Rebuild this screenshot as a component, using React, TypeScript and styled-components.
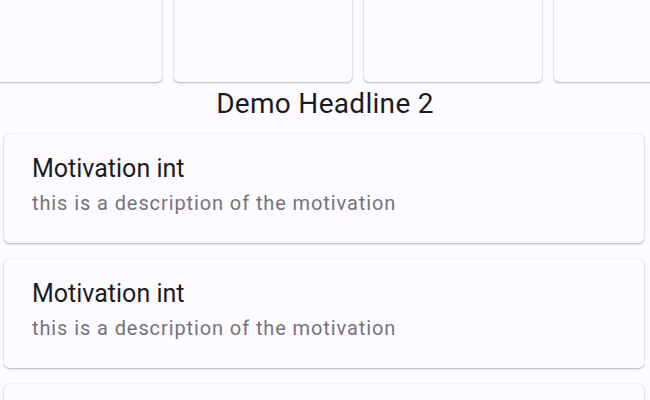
import React from "react";
import styled, { createGlobalStyle } from "styled-components";

const GlobalStyle = createGlobalStyle`
  html, body {
    margin: 0;
    padding: 0;
    background: #fdfbff;
    font-family: Roboto, "Noto Sans", sans-serif;
    overflow: hidden;
  }
`;

const Page = styled.div`
  width: 650px;
  height: 400px;
  overflow: hidden;
  background: #fdfbff;
`;

const Strip = styled.div`
  display: flex;
  gap: 12px;
  margin: -30px 0 0 -16px;
  padding-bottom: 2px;
`;

const TileCard = styled.div`
  flex: 0 0 178px;
  height: 112px;
  border-radius: 5px;
  background: #fdfbff;
  box-shadow: 0 1px 2px rgba(60, 60, 90, 0.35), 0 0 1px rgba(80, 80, 140, 0.35);
`;

const Headline = styled.h2`
  margin: 2px 0 0;
  text-align: center;
  font-size: 28px;
  font-weight: 400;
  letter-spacing: 0.3px;
  line-height: 36px;
  color: #1b1b1f;
`;

const List = styled.div`
  display: flex;
  flex-direction: column;
  gap: 16px;
  padding: 12px 6px 0 4px;
`;

const ItemCard = styled.div`
  height: 109px;
  flex: 0 0 auto;
  box-sizing: border-box;
  padding: 19px 28px 0;
  border-radius: 5px;
  background: #fdfbff;
  box-shadow: 0 1px 2px rgba(60, 60, 90, 0.35), 0 0 1px rgba(80, 80, 140, 0.35);
  display: flex;
  flex-direction: column;
`;

const Title = styled.div`
  font-size: 25px;
  line-height: 32px;
  color: #1b1b1f;
`;

const Description = styled.div`
  margin-top: 6px;
  font-size: 20px;
  line-height: 24px;
  letter-spacing: 0.9px;
  color: #74747b;
`;

const items = [1, 2];

export default function App() {
  return (
    <Page>
      <GlobalStyle />
      <Strip>
        {[0, 1, 2, 3].map((i) => (
          <TileCard key={i} />
        ))}
      </Strip>
      <Headline>Demo Headline 2</Headline>
      <List>
        {items.map((i) => (
          <ItemCard key={i}>
            <Title>Motivation int</Title>
            <Description>this is a description of the motivation</Description>
          </ItemCard>
        ))}
        <ItemCard />
      </List>
    </Page>
  );
}
